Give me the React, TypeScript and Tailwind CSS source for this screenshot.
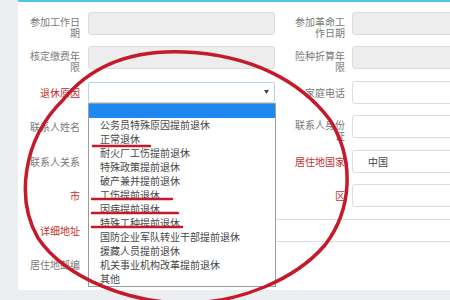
const reasons = [
  '',
  '公务员特殊原因提前退休',
  '正常退休',
  '耐火厂工伤提前退休',
  '特殊政策提前退休',
  '破产兼并提前退休',
  '工伤提前退休',
  '因病提前退休',
  '特殊工种提前退休',
  '国防企业军队转业干部提前退休',
  '援藏人员提前退休',
  '机关事业机构改革提前退休',
  '其他',
]

function Label({ text, red }: { text: string; red?: boolean }) {
  // labels longer than five characters wrap and sit a little low in the row
  return (
    <div
      className={`w-[52px] shrink-0 text-right leading-[11px] ${text.length > 5 ? 'mt-[7px]' : ''} ${red ? 'text-[#c2302e]' : 'text-[#7a7a7a]'}`}
    >
      {text}
    </div>
  )
}

function Input({ value, readOnly, wide }: { value?: string; readOnly?: boolean; wide?: boolean }) {
  return (
    <div
      className={`flex h-[23px] items-center rounded-[3px] border border-[#dcdcdc] pl-[15px] text-[#444] ${readOnly ? 'bg-[#ededed]' : 'bg-white'} ${wide ? 'flex-1' : 'w-[187px]'}`}
    >
      {value}
    </div>
  )
}

function Row({ children }: { children: React.ReactNode }) {
  return <div className="flex h-[34.5px] items-center">{children}</div>
}

function Left({ label, red, children }: { label: string; red?: boolean; children: React.ReactNode }) {
  return (
    <div className="flex w-[257px] shrink-0 items-center gap-[8px] pl-[10px]">
      <Label text={label} red={red} />
      {children}
    </div>
  )
}

function Right({ label, red, children }: { label: string; red?: boolean; children?: React.ReactNode }) {
  return (
    <div className="ml-[18px] flex flex-1 items-center gap-[7px]">
      <Label text={label} red={red} />
      {children}
    </div>
  )
}

function ReasonSelect() {
  return (
    <div className="relative h-[21px] w-[187px]">
      <div className="flex h-full items-center justify-end rounded-[2px] border border-[#b8d4ea] bg-white pr-[5px]">
        <svg width="5" height="4" viewBox="0 0 5 4">
          <path d="M0 0 L5 0 L2.5 4 Z" fill="#444" />
        </svg>
      </div>
      <div className="absolute left-0 top-[21px] z-10 w-[188px] border border-[#9c9c9c] bg-white">
        {reasons.map((r, i) => (
          <div
            key={i}
            className={`h-[14px] pl-[11px] leading-[14px] text-[#484848] ${i === 0 ? 'bg-[#1e88f0]' : ''}`}
          >
            {r}
          </div>
        ))}
      </div>
    </div>
  )
}

export default function App() {
  return (
    <div className="relative h-[300px] w-[450px] overflow-hidden bg-[#eceef2] font-['Noto_Sans_CJK_SC',sans-serif] text-[10px]">
      <div className="ml-[18px] w-[460px] border-t-2 border-[#4fc3e8] bg-white pb-[8px] pt-[4px]">
        <Row>
          <Left label="参加工作日期">
            <Input readOnly />
          </Left>
          <Right label="参加革命工作日期">
            <Input readOnly wide />
          </Right>
        </Row>
        <Row>
          <Left label="核定缴费年限">
            <Input readOnly />
          </Left>
          <Right label="险种折算年限">
            <Input readOnly wide />
          </Right>
        </Row>
        <Row>
          <Left label="退休原因" red>
            <ReasonSelect />
          </Left>
          <Right label="家庭电话">
            <Input wide />
          </Right>
        </Row>
        <Row>
          <Left label="联系人姓名">
            <Input />
          </Left>
          <Right label="联系人身份证">
            <Input wide />
          </Right>
        </Row>
        <Row>
          <Left label="联系人关系">
            <Input />
          </Left>
          <Right label="居住地国家" red>
            <Input value="中国" wide />
          </Right>
        </Row>
        <Row>
          <Left label="市" red>
            <Input />
          </Left>
          <Right label="区" red>
            <Input wide />
          </Right>
        </Row>
        <Row>
          <div className="flex flex-1 items-center gap-[8px] pl-[10px]">
            <Label text="详细地址" red />
            <Input wide />
          </div>
        </Row>
        <Row>
          <Left label="居住地邮编">
            <Input />
          </Left>
        </Row>
      </div>

      <svg className="pointer-events-none absolute left-0 top-0 z-20" width="450" height="300" viewBox="0 0 450 300">
        <g fill="none" stroke="#c41a2a" strokeLinecap="round">
          <path
            d="M63 100 C95 60 140 50 185 52 C250 55 300 80 330 120 C355 160 352 210 325 245 C295 280 240 302 190 303 C130 304 65 278 38 238 C16 200 22 140 63 100"
            strokeWidth="3.5"
          />
          <path d="M93 146 L150 146" strokeWidth="2.5" />
          <path d="M92 199 L172 199" strokeWidth="2.5" />
          <path d="M92 213 L178 213" strokeWidth="2.5" />
          <path d="M92 227 L182 227" strokeWidth="2.5" />
        </g>
      </svg>
    </div>
  )
}
